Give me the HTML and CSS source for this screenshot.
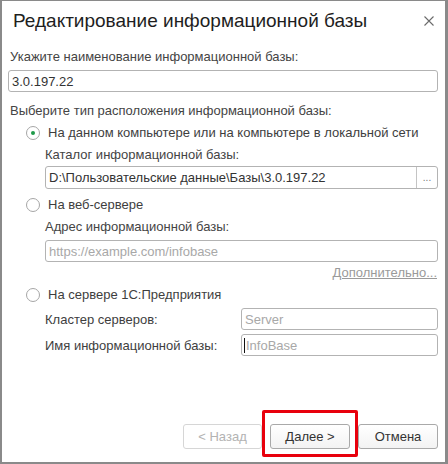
FILE: index.html
```html
<!DOCTYPE html>
<html lang="ru">
<head>
<meta charset="utf-8">
<title>Редактирование информационной базы</title>
<link rel="stylesheet" href="styles.css">
</head>
<body>
<div class="window">
  <div class="titlebar">
    <span class="title">Редактирование информационной базы</span>
    <svg class="close" width="10" height="10" viewBox="0 0 10 10"><path d="M0.5 0.5L9.5 9.5M9.5 0.5L0.5 9.5" stroke="#6a6a6a" stroke-width="1.1" fill="none"/></svg>
  </div>
  <div class="label l1">Укажите наименование информационной базы:</div>
  <div class="field f1"><span class="val">3.0.197.22</span></div>
  <div class="label l2">Выберите тип расположения информационной базы:</div>

  <div class="radio-row r1"><span class="radio checked"></span><span class="rtext">На данном компьютере или на компьютере в локальной сети</span></div>
  <div class="label sub">Каталог информационной базы:</div>
  <div class="field sub-field path"><span class="val">D:\Пользовательские данные\Базы\3.0.197.22</span><span class="browse">...</span></div>

  <div class="radio-row r2"><span class="radio"></span><span class="rtext">На веб-сервере</span></div>
  <div class="label sub">Адрес информационной базы:</div>
  <div class="field sub-field url"><span class="ph">https://example.com/infobase</span></div>
  <div class="more-row"><span class="more">Дополнительно...</span></div>

  <div class="radio-row r3"><span class="radio"></span><span class="rtext">На сервере 1С:Предприятия</span></div>
  <div class="pair p1"><span class="plabel">Кластер серверов:</span><div class="field small"><span class="ph">Server</span></div></div>
  <div class="pair p2"><span class="plabel">Имя информационной базы:</span><div class="field small"><span class="caret"></span><span class="ph">InfoBase</span></div></div>

  <div class="footer">
    <button class="btn disabled">&lt; Назад</button>
    <span class="btn-wrap"><button class="btn">Далее &gt;</button><span class="highlight"></span></span>
    <button class="btn">Отмена</button>
  </div>
</div>
</body>
</html>
```
FILE: styles.css
```css
html, body {
  margin: 0;
  padding: 0;
  background: #ffffff;
}
body {
  font-family: "Liberation Sans", Arial, sans-serif;
  font-size: 13px;
  color: #444444;
}
.window {
  width: 448px;
  height: 464px;
  box-sizing: border-box;
  border-style: solid;
  border-color: #8a8a8a;
  border-width: 1px 3px 2px 2px;
  padding: 0 7px 13px 6px;
  display: flex;
  flex-direction: column;
  background: #ffffff;
}
.titlebar {
  height: 40px;
  flex: none;
  display: flex;
  align-items: center;
  justify-content: space-between;
}
.title {
  font-size: 19px;
  line-height: 40px;
  color: #1e1e1e;
  padding-left: 5px;
}
.close {
  margin-right: 4px;
  margin-top: 0px;
}
.label {
  height: 22px;
  line-height: 22px;
  padding-left: 2px;
  flex: none;
  white-space: nowrap;
}
.l1 { margin-top: 5px; }
.l2 { margin-top: 8px; }
.field {
  height: 22px;
  box-sizing: border-box;
  border: 1px solid #b3b3b3;
  border-radius: 3px;
  display: flex;
  align-items: center;
  padding-left: 3px;
  color: #333333;
  flex: none;
  background: #ffffff;
  white-space: nowrap;
  overflow: hidden;
}
.f1 { margin-top: 2px; }
.radio-row {
  height: 22px;
  display: flex;
  align-items: center;
  flex: none;
  padding-left: 18px;
}
.r2 { margin-top: 5px; }
.radio {
  width: 14px;
  height: 14px;
  box-sizing: border-box;
  border: 1px solid #a6a6a6;
  border-radius: 50%;
  display: inline-flex;
  align-items: center;
  justify-content: center;
  margin-right: 8px;
  background: #ffffff;
}
.radio.checked::after {
  content: "";
  width: 4px;
  height: 4px;
  border-radius: 50%;
  background: #1f9a4a;
}
.rtext {
  line-height: 22px;
  color: #3e3e3e;
}
.sub {
  margin-left: 35px;
}
.sub-field {
  margin-left: 37px;
  margin-top: 0;
}
.path {
  height: 23px;
  padding-right: 0;
}
.path .val { flex: 1; }
.browse {
  width: 21px;
  height: 100%;
  border-left: 1px solid #c4c4c4;
  display: flex;
  align-items: flex-end;
  justify-content: center;
  font-size: 10px;
  color: #777777;
  line-height: 14px;
  box-sizing: border-box;
  padding-bottom: 3px;
}
.url { margin-top: 2px; }
.ph { color: #a8a8a8; }
.more-row {
  height: 22px;
  line-height: 22px;
  display: flex;
  justify-content: flex-end;
  padding-right: 1px;
  flex: none;
}
.more {
  color: #9a9a9a;
  text-decoration: underline;
}
.pair {
  display: flex;
  align-items: center;
  height: 22px;
  flex: none;
  padding-left: 37px;
}
.p1 { margin-top: 2px; }
.p2 { margin-top: 4px; }
.plabel {
  width: 196px;
  flex: none;
  color: #3e3e3e;
}
.small {
  flex: 1;
}
.caret {
  width: 1px;
  height: 15px;
  background: #111111;
  margin-right: 1px;
  margin-left: -1px;
}
.footer {
  margin-top: auto;
  display: flex;
  justify-content: flex-end;
  gap: 8px;
  flex: none;
}
.btn {
  width: 80px;
  height: 25px;
  box-sizing: border-box;
  border: 1px solid #a9a9a9;
  border-radius: 3px;
  background: linear-gradient(#ffffff, #f3f3f3);
  font-family: "Liberation Sans", Arial, sans-serif;
  font-size: 13px;
  color: #333333;
  padding: 0;
  margin: 0;
}
.btn.disabled {
  border-color: #d6d6d6;
  color: #b3b3b3;
  background: #ffffff;
  width: 79px;
}
.btn-wrap {
  position: relative;
  display: inline-block;
  height: 25px;
}
.highlight {
  position: absolute;
  left: -8px;
  right: -8px;
  top: -14px;
  bottom: -8px;
  border: 3px solid #e8000c;
  border-radius: 2px;
  pointer-events: none;
}
```
